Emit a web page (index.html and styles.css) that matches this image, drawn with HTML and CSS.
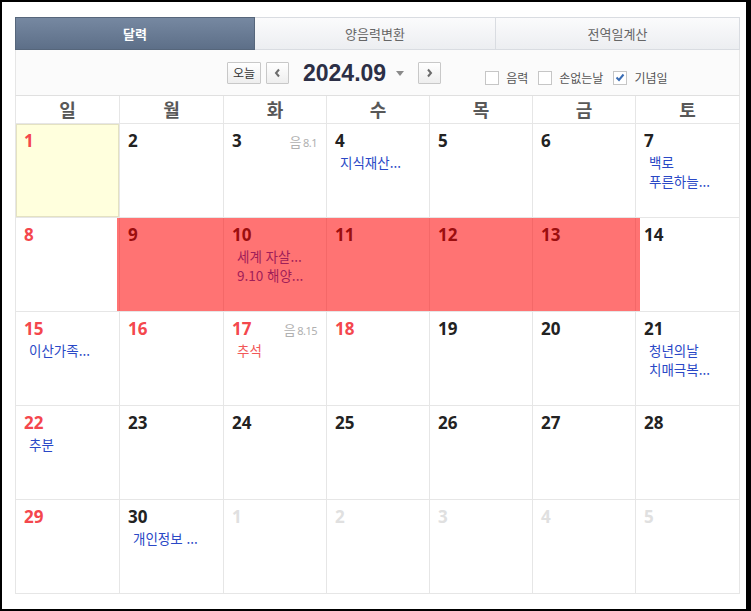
FILE: index.html
```html
<!DOCTYPE html>
<html lang="ko">
<head>
<meta charset="utf-8">
<title>달력</title>
<link rel="stylesheet" href="styles.css">
</head>
<body>
<div class="cal">
  <div class="tabs">
    <div class="tab active">달력</div>
    <div class="tab">양음력변환</div>
    <div class="tab">전역일계산</div>
  </div>
  <div class="toolbar">
    <button class="btn today">오늘</button>
    <button class="btn arrow"><svg width="7" height="10" viewBox="0 0 7 10"><path d="M5 1.5 L2 5 L5 8.5" fill="none" stroke="#6b6b6b" stroke-width="2"/></svg></button>
    <span class="title">2024.09</span>
    <span class="caret"></span>
    <button class="btn arrow next"><svg width="7" height="10" viewBox="0 0 7 10"><path d="M2 1.5 L5 5 L2 8.5" fill="none" stroke="#6b6b6b" stroke-width="2"/></svg></button>
    <div class="opts">
      <label class="chk"><span class="box"></span>음력</label>
      <label class="chk"><span class="box"></span>손없는날</label>
      <label class="chk"><span class="box on"><svg width="10" height="9" viewBox="0 0 10 9"><path d="M1.5 4.5 L4 7 L8.5 1.5" fill="none" stroke="#3a6db5" stroke-width="2"/></svg></span>기념일</label>
    </div>
  </div>
  <div class="head">
    <div class="hd">일</div><div class="hd">월</div><div class="hd">화</div><div class="hd">수</div><div class="hd">목</div><div class="hd">금</div><div class="hd">토</div>
  </div>
  <div class="weeks">
    <div class="cell todaycell"><div class="top"><span class="num sun">1</span></div></div>
    <div class="cell"><div class="top"><span class="num">2</span></div></div>
    <div class="cell"><div class="top"><span class="num">3</span><span class="lunar"><span class="lk">음</span>8.1</span></div></div>
    <div class="cell"><div class="top"><span class="num">4</span></div><div class="ev"><div>지식재산...</div></div></div>
    <div class="cell"><div class="top"><span class="num">5</span></div></div>
    <div class="cell"><div class="top"><span class="num">6</span></div></div>
    <div class="cell"><div class="top"><span class="num">7</span></div><div class="ev"><div>백로</div><div>푸른하늘...</div></div></div>

    <div class="cell"><div class="top"><span class="num sun">8</span></div></div>
    <div class="cell"><div class="top"><span class="num">9</span></div></div>
    <div class="cell"><div class="top"><span class="num">10</span></div><div class="ev"><div>세계 자살...</div><div>9.10 해양...</div></div></div>
    <div class="cell"><div class="top"><span class="num">11</span></div></div>
    <div class="cell"><div class="top"><span class="num">12</span></div></div>
    <div class="cell"><div class="top"><span class="num">13</span></div></div>
    <div class="cell"><div class="top"><span class="num">14</span></div></div>

    <div class="cell"><div class="top"><span class="num sun">15</span></div><div class="ev"><div>이산가족...</div></div></div>
    <div class="cell"><div class="top"><span class="num sun">16</span></div></div>
    <div class="cell"><div class="top"><span class="num sun">17</span><span class="lunar"><span class="lk">음</span>8.15</span></div><div class="ev"><div class="hol">추석</div></div></div>
    <div class="cell"><div class="top"><span class="num sun">18</span></div></div>
    <div class="cell"><div class="top"><span class="num">19</span></div></div>
    <div class="cell"><div class="top"><span class="num">20</span></div></div>
    <div class="cell"><div class="top"><span class="num">21</span></div><div class="ev"><div>청년의날</div><div>치매극복...</div></div></div>

    <div class="cell"><div class="top"><span class="num sun">22</span></div><div class="ev"><div>추분</div></div></div>
    <div class="cell"><div class="top"><span class="num">23</span></div></div>
    <div class="cell"><div class="top"><span class="num">24</span></div></div>
    <div class="cell"><div class="top"><span class="num">25</span></div></div>
    <div class="cell"><div class="top"><span class="num">26</span></div></div>
    <div class="cell"><div class="top"><span class="num">27</span></div></div>
    <div class="cell"><div class="top"><span class="num">28</span></div></div>

    <div class="cell"><div class="top"><span class="num sun">29</span></div></div>
    <div class="cell"><div class="top"><span class="num">30</span></div><div class="ev"><div>개인정보 ...</div></div></div>
    <div class="cell"><div class="top"><span class="num off">1</span></div></div>
    <div class="cell"><div class="top"><span class="num off">2</span></div></div>
    <div class="cell"><div class="top"><span class="num off">3</span></div></div>
    <div class="cell"><div class="top"><span class="num off">4</span></div></div>
    <div class="cell"><div class="top"><span class="num off">5</span></div></div>

    <div class="selection"></div>
  </div>
</div>
</body>
</html>
```
FILE: styles.css
```css
html {
  background: #000;
}
body {
  margin: 2px 5px 2px 2px;
  height: 607px;
  box-sizing: border-box;
  padding: 15px 0 0 13px;
  background: #fff;
  font-family: "Noto Sans CJK KR", "Noto Sans", sans-serif;
  color: #222;
}
.cal {
  width: 725px;
}
.tabs {
  display: grid;
  grid-template-columns: 240px 241px 244px;
  height: 33px;
}
.tab {
  box-sizing: border-box;
  height: 33px;
  line-height: 31px;
  text-align: center;
  font-size: 13px;
  color: #666;
  background: linear-gradient(#fbfbfc, #eceef1);
  border: 1px solid #d9dce1;
  border-left: none;
}
.tab.active {
  color: #fff;
  font-weight: 700;
  background: linear-gradient(#7688a1, #5d6f88);
  border: 1px solid #56667b;
}
.toolbar {
  display: flex;
  align-items: center;
  height: 45px;
  padding-left: 211px;
  background: #fbfbfb;
  border-left: 1px solid #e6e6e6;
  border-right: 1px solid #e6e6e6;
  border-bottom: 1px solid #e0e0e0;
}
.btn {
  box-sizing: border-box;
  height: 22px;
  padding: 0;
  margin: 0;
  border: 1px solid #c8c8c8;
  border-radius: 1px;
  background: linear-gradient(#ffffff, #eeeeee);
  font-family: "Noto Sans CJK KR", sans-serif;
  display: flex;
  align-items: center;
  justify-content: center;
}
.today {
  width: 34px;
  font-size: 12px;
  color: #333;
}
.arrow {
  width: 23px;
  margin-left: 5px;
}
.arrow.next {
  margin-left: 14px;
}
.title {
  margin-left: 14px;
  font-family: "Liberation Sans", Arial, sans-serif;
  font-weight: 700;
  font-size: 23px;
  line-height: 26px;
  color: #2c2f46;
}
.caret {
  margin-left: 10px;
  margin-top: 1px;
  width: 0;
  height: 0;
  border-left: 4px solid transparent;
  border-right: 4px solid transparent;
  border-top: 5px solid #8a8a8a;
}
.opts {
  display: flex;
  align-items: center;
  margin-left: 44px;
  margin-top: 10px;
}
.chk {
  display: flex;
  align-items: center;
  font-size: 12px;
  color: #555;
  margin-right: 10px;
}
.box {
  box-sizing: border-box;
  width: 14px;
  height: 14px;
  margin-right: 7px;
  border: 1px solid #c6c6c6;
  background: #fff;
  display: flex;
  align-items: center;
  justify-content: center;
}
.head {
  display: grid;
  grid-template-columns: 104px 104px 103px 103px 103px 103px 1fr;
  border-left: 1px solid #e6e6e6;
  height: 28px;
}
.hd {
  border-right: 1px solid #e6e6e6;
  border-bottom: 1px solid #e6e6e6;
  text-align: center;
  font-size: 18px;
  font-weight: 700;
  line-height: 27px;
  color: #585858;
}
.weeks {
  position: relative;
  display: grid;
  grid-template-columns: 104px 104px 103px 103px 103px 103px 1fr;
  grid-auto-rows: 94px;
  border-left: 1px solid #e6e6e6;
}
.cell {
  box-sizing: border-box;
  border-right: 1px solid #e6e6e6;
  border-bottom: 1px solid #e6e6e6;
  padding: 7px 9px 0 8px;
  overflow: hidden;
}
.todaycell {
  background: #ffffdd;
  box-shadow: inset 0 0 0 1px #e4e2c2;
}
.top {
  display: flex;
  justify-content: space-between;
  align-items: baseline;
  height: 20px;
}
.num {
  font-family: "Noto Sans", "Open Sans", sans-serif;
  font-weight: 700;
  font-size: 17px;
  line-height: 20px;
  color: #222;
}
.num.sun {
  color: #f4474d;
}
.num.off {
  color: #e0e0e0;
}
.lunar {
  font-family: "Noto Sans", sans-serif;
  font-size: 11px;
  color: #b0b0b0;
  letter-spacing: -0.5px;
}
.lk {
  font-family: "Noto Sans CJK KR", sans-serif;
  font-size: 13px;
  margin-right: 2px;
}
.ev {
  margin-top: 2px;
  padding-left: 5px;
  font-size: 13.5px;
  line-height: 19px;
  color: #2a48c6;
  white-space: nowrap;
}
.ev .hol {
  color: #f25858;
}
.selection {
  position: absolute;
  left: 101px;
  top: 94px;
  width: 523px;
  height: 93px;
  background: rgba(255, 0, 0, 0.55);
}
```
